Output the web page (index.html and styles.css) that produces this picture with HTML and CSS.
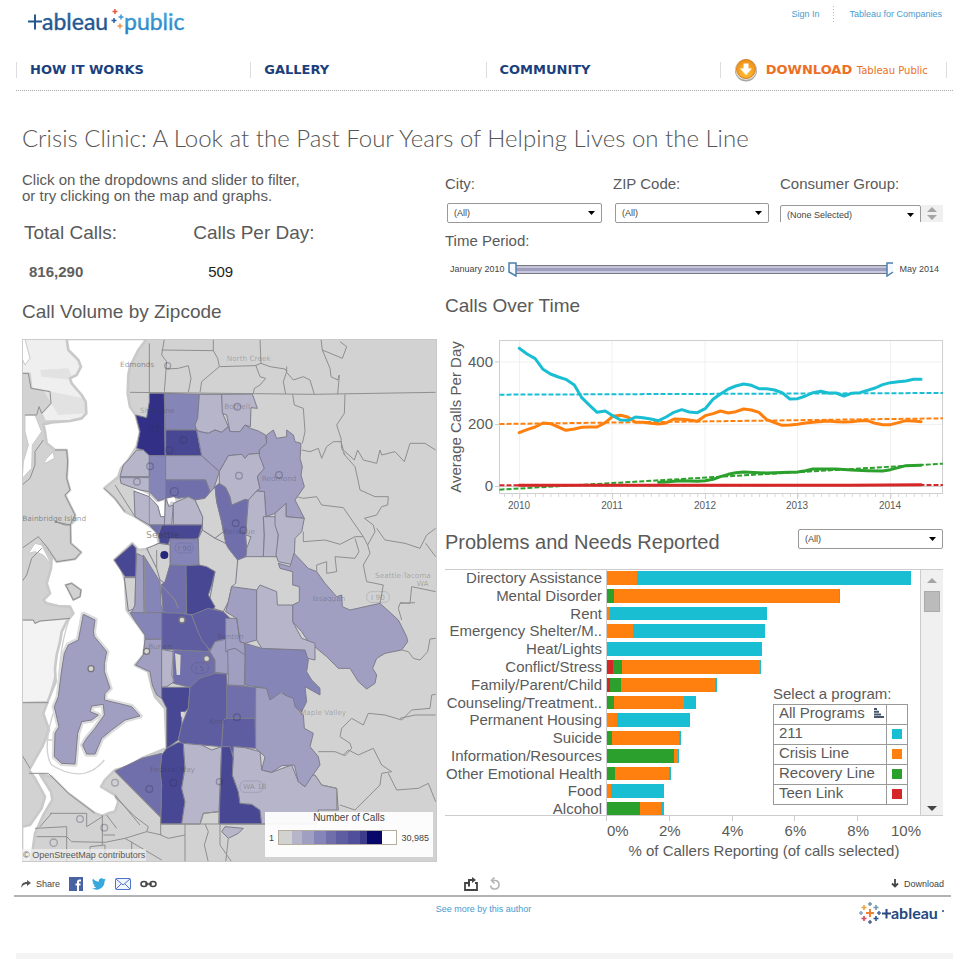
FILE: index.html
```html
<!DOCTYPE html>
<html lang="en">
<head>
<meta charset="utf-8">
<meta name="viewport" content="width=device-width, initial-scale=1">
<title>Crisis Clinic | Tableau Public</title>
<link rel="stylesheet" href="styles.css">
</head>
<body>
<header class="site-header">
  <div class="brand-row">
    <a href="#" class="brand" aria-label="Tableau Public">
      <svg width="162" height="32" viewBox="26 6 162 32">
        <defs>
          <linearGradient id="navy" x1="0" y1="0" x2="0" y2="1"><stop offset="0" stop-color="#2f78b8"/><stop offset="1" stop-color="#1c447e"/></linearGradient>
          <linearGradient id="sky" x1="0" y1="0" x2="0" y2="1"><stop offset="0" stop-color="#59b8e6"/><stop offset="1" stop-color="#1b77bd"/></linearGradient>
        </defs>
        <path d="M28 21.500h14M35 14.500v15" stroke="#24578f" stroke-width="2"/>
        <text class="wordmark" x="42" y="30" fill="url(#navy)" stroke="#24578f">ableau</text>
        <text class="wordmark" x="124" y="30" fill="url(#sky)" stroke="#2f90cf">public</text>
        <path d="M115 9v5M112.500 11.500h5" stroke="#e4573d" stroke-width="1.500"/>
        <path d="M121 14.500v5M118.500 17h5" stroke="#3f9bd5" stroke-width="1.500"/>
        <path d="M114 18v5M111.500 20.500h5" stroke="#2a5f9e" stroke-width="1.500"/>
        <path d="M120 23.500v5M117.500 26h5" stroke="#f0924a" stroke-width="1.500"/>
      </svg>
    </a>
    <div class="account">
      <a href="#">Sign In</a>
      <a href="#">Tableau for Companies</a>
    </div>
  </div>
  <nav class="main-nav">
    <a href="#">HOW IT WORKS</a>
    <a href="#">GALLERY</a>
    <a href="#">COMMUNITY</a>
    <a href="#" class="download">
      <svg width="24" height="24" viewBox="0 0 24 24">
        <defs><radialGradient id="orb" cx=".5" cy=".7" r=".7"><stop offset="0" stop-color="#ffc23c"/><stop offset="1" stop-color="#ee8a12"/></radialGradient></defs>
        <circle cx="12" cy="12.500" r="11" fill="#a9a9a9"/><circle cx="12" cy="11.500" r="10.500" fill="#e9e5df"/>
        <circle cx="12" cy="11" r="9.500" fill="url(#orb)" stroke="#d98420"/>
        <path d="M9.500 5.500h5v5h3.500L12 17l-6-6.500h3.500z" fill="#fff"/>
      </svg>
      <span>DOWNLOAD <small>Tableau Public</small></span>
    </a>
  </nav>
</header>

<main>
<h1>Crisis Clinic: A Look at the Past Four Years of Helping Lives on the Line</h1>
<div class="dashboard">
  <section class="left">
    <p class="intro">Click on the dropdowns and slider to filter,<br>or try clicking on the map and graphs.</p>
    <dl class="stats">
      <div><dt>Total Calls:</dt><dd class="strong">816,290</dd></div>
      <div><dt>Calls Per Day:</dt><dd>509</dd></div>
    </dl>
    <h2>Call Volume by Zipcode</h2>
    <div class="map">
      <svg class="map-art" viewBox="21 12 1245 1569" role="img" aria-label="Map of call volume by zipcode">
        <rect x="21" y="12" width="1245" height="1569" fill="#d2d2d2"/>
        <g fill="#efefef" stroke="#d0d0d0" stroke-width="5">
          <path d="M21 12H155L160 45 190 75 198 95 185 120 165 130 170 145 200 180 212 200 214 235 200 250 165 258 90 258 80 235 108 205 105 170 50 160 45 115H21z"/>
          <path d="M21 855L55 855 60 865 75 858 165 850 140 920 130 985 100 1100 21 1103z" fill="#f3f3f3"/>
        </g>
        <path d="M75 105L160 100 175 135 80 125zM85 165L205 190 212 235 130 240z" fill="#e2e2e2"/>
        <path class="shore" d="M155 12L160 45 190 75 198 95 185 120 165 130 170 145 200 180 212 200 214 235 200 250 165 258 110 262 85 268 90 290 95 325 120 345 155 345 158 380 155 430 165 465 150 480 180 540 180 555 165 570 167 625 198 652 180 672 125 680 95 635 80 625 110 670 108 700 95 745 105 775 85 795 95 805 130 813 165 815 175 835 155 860 140 890 135 920 125 960 120 1000 122 1040 100 1095 85 1135 102 1185 82 1235 42 1305 60 1330 90 1385 80 1420 45 1470 21 1475V1581H48L60 1495 85 1440 112 1395 108 1370 75 1318 110 1325 160 1375 200 1405 240 1435 262 1443 280 1435 300 1430 310 1400 300 1380 258 1355 270 1335 300 1305 340 1295 380 1270 455 1240 450 1120 420 1085 410 1055 400 1010 360 990 385 960 390 925 390 900 365 865 335 825 330 735 320 705 298 675 352 625 370 645 410 640 432 625 425 590 400 570 360 545 330 530 300 490 268 460 310 425 318 400 340 375 365 335 375 290 362 240 345 215 338 175 340 120 345 95 370 45 395 12z"/>
        <g class="shore thin">
          <path d="M30 12L45 70 30 90 21 70V12zM30 240L60 240 80 290 52 330 50 400 22 430 25 380 40 330 30 290zM115 350L118 370 85 388 95 370zM60 625L80 630 110 690 85 660 60 650 40 655z"/>
          <path d="M345 455L375 465 403 478 425 500 448 495 450 545 437 545 428 512 400 490 368 475zM455 487L480 480 485 510 470 500 460 515z"/>
        </g>
        <path d="M152 750L170 745 198 765 195 785 175 795z" class="land"/>
        <path class="waterline" d="M170 835C140 900 130 1000 128 1100 90 1190 90 1260 110 1290 190 1340 240 1310 268 1275M90 1215H115"/>
        <path class="island-rim" d="M205 838L240 855 235 890 238 905 275 950 268 985 268 1010 285 1060 270 1075 268 1095 330 1110 350 1115 375 1143 330 1155 290 1185 260 1210 240 1257 215 1257 203 1230 215 1210 240 1180 268 1140 265 1108 230 1113 225 1130 250 1140 230 1155 200 1160 188 1195 180 1287 140 1285 118 1265 120 1195 132 1175 118 1115 130 1085 140 1005 148 955 160 930 190 915 197 880z"/>
        <g class="zips">
          <path class="c7" d="M403 175L448 175 450 362 390 362 385 345 365 340 375 290 362 240 395 248 403 200z"/>
          <path class="c3" d="M448 175L553 178 548 250 540 270 545 285 455 283 450 285z"/>
          <path class="c1" d="M553 178L620 178 625 240 640 275 620 292 600 285 580 295 555 290 545 285 540 270 548 250z"/>
          <path class="c1" d="M620 178L712 177 727 220 708 218 706 275 690 270 675 290 645 290 635 240 622 235z"/>
          <path class="c6" d="M452 285H545L560 362H452z"/>
          <path class="c2" d="M545 285L555 290 580 295 600 285 620 292 640 275 645 290 675 290 690 270 706 280 730 288 752 300 755 325 733 345 733 355 700 358 690 370 680 358 640 362 613 410 560 362z"/>
          <path class="c1" d="M365 345L385 345 403 362V425H315L325 390 340 375z"/>
          <path class="c3" d="M403 362H452V490L430 498 403 470z"/>
          <path class="c2" d="M452 362H560L613 410 595 465 585 470 572 435H452z"/>
          <path class="c4" d="M452 435H572L585 470 570 490 540 495 520 485 490 490 475 485 452 490z"/>
          <path class="c1" d="M315 428H403V470L375 465 345 455 318 445z"/>
          <path class="c1" d="M357 468L403 485 428 512 437 545 450 545V570H403L360 545z"/>
          <path class="c1" d="M452 490L462 515 475 510 470 570H448z"/>
          <path class="c1" d="M475 505L520 485 540 495 563 545 562 570H475z"/>
          <path class="c4" d="M403 570L440 570 430 600z"/>
          <path class="c6" d="M440 570H562L550 610 530 615 465 612 460 628 435 625 430 600z"/>
          <path class="c3" d="M465 612L550 612 552 690 515 692 465 690z"/>
          <path class="c0" d="M540 495L570 490 600 455 605 500 620 560 625 590 600 610 562 585 563 545z"/>
          <path class="c0" d="M562 585L600 610 632 625 668 675 662 745 650 755 640 800 625 830 580 815 600 710 552 690 550 610z"/>
          <path class="c4" d="M600 455L613 445 632 457 648 490 650 510 690 493 700 495 692 600 695 640 693 665 668 675 640 640 632 625 620 560 605 500z"/>
          <path class="c1" d="M613 410L640 362 680 358 690 370 700 358 733 355 748 400 727 425 735 460 725 468 700 495 690 493 650 510 645 485 632 457 613 445z"/>
          <path class="c2" d="M733 345L755 325 755 300 775 285 785 310 815 305 815 285 835 300 840 320 858 325 855 370 862 395 858 420 868 455 840 495 868 550 813 545 813 505 780 535 753 545 748 470 725 468 735 460 727 425 748 400 733 362z"/>
          <path class="c1" d="M700 495L725 468 748 470 753 545 745 550 748 600 745 665H693L695 640 708 605 692 600z"/>
          <path class="c1" d="M745 545L780 545 790 600 785 665H745L748 600z"/>
          <path class="c1" d="M780 535L813 505 813 545 868 550 860 590 840 610 837 690 790 680 783 660 790 600 780 570z"/>
          <path class="c2" d="M837 655L880 700 905 710 930 745 965 785 980 780 982 815 1005 825 1095 805 1150 855 1175 905 1178 920 1160 945 1110 955 1085 970 1073 1000 1085 1020 1080 1045 1055 1062 1030 1040 1005 1000 970 1000 935 965 905 940 880 920 860 890 833 860 833 810 853 800 853 755 833 750 833 710 795 700 790 685 825 695z"/>
          <path class="c6" d="M352 628L298 675 330 725H363V640z"/>
          <path class="c0" d="M328 728H362L360 820 340 828z"/>
          <path class="c2" d="M365 655L385 665 388 835H348L360 810 362 725z"/>
          <path class="c3" d="M385 660L435 740 438 810 445 833H388z"/>
          <path class="c0" d="M395 640L432 625 465 630V690L450 745 435 735 425 700z"/>
          <path class="c4" d="M465 690L513 692 515 835H445L438 750 450 740z"/>
          <path class="c6" d="M513 692L552 690 575 695 600 710 590 750 580 780 600 815 580 840 515 838z"/>
          <path class="c3" d="M345 833H440V913H390V900L365 865z"/>
          <path class="c5" d="M440 833L500 835 530 840 545 880 570 925 585 950 440 943z"/>
          <path class="c5" d="M530 840L580 820 625 830 645 850 640 910 600 920 585 945 560 915 545 880z"/>
          <path class="c2" d="M390 913H440V1090L425 1080 412 1050 405 1010 362 990 385 960z"/>
          <path class="c1" d="M440 943L475 950 478 1040 455 1055 440 1057z"/>
          <path class="c4" d="M475 945L585 950 600 975V1015L575 1025 555 1030 550 1045 525 1057 475 1045z"/>
          <path class="c2" d="M585 950L600 920 645 910V1017L600 1012V975z"/>
          <path class="c6" d="M440 1057H525L520 1120 500 1140V1170L490 1215 455 1240V1120L440 1090z"/>
          <path class="c5" d="M525 1057L555 1030 600 1015 635 1017 640 1150 625 1155 620 1235 560 1230 500 1225 490 1215 500 1170 520 1120z"/>
          <path class="c4" d="M635 1050L722 1057 720 1150H635z"/>
          <path class="c5" d="M635 1150H720L722 1240 660 1235 650 1260 640 1235H620L625 1155z"/>
          <path class="c6" d="M455 1240L440 1260 435 1310 440 1350 437 1467H500L510 1400 500 1360 510 1300 505 1225 490 1222z"/>
          <path class="c1" d="M505 1225L560 1230 590 1245 620 1235 612 1430 565 1435 555 1467H500L510 1400 500 1360 510 1300z"/>
          <path class="c6" d="M620 1235H645L655 1270 652 1320 670 1370 675 1405 710 1408 735 1425 740 1467H612z"/>
          <path class="c4" d="M300 1308L380 1270 440 1255 435 1310 440 1350 437 1447z"/>
          <path class="c1" d="M655 1235L690 1238 735 1250 740 1305 770 1312 830 1290 850 1340 870 1355 885 1320 900 1320 920 1350 965 1360 970 1425 910 1425 905 1467H740L735 1425 710 1408 675 1405 670 1370 652 1320 655 1270z"/>
          <path class="c2" d="M722 1057L755 1060 765 1095 790 1070 810 1080 835 1090 845 1120 865 1140 868 1180 895 1195 885 1235 910 1265 915 1290 890 1325 870 1355 850 1340 838 1290 800 1292 770 1312 740 1305 750 1265 722 1240z"/>
          <path class="c3" d="M690 925L740 940 870 945 880 975 875 1010 890 1035 915 1060 915 1080 870 1055 875 1100 860 1130 840 1115 835 1090 810 1080 800 1070 780 1085 765 1095 755 1060 690 1050z"/>
          <path class="c2" d="M632 830L665 850 675 920 690 925 725 915V765L650 755 640 800zM632 850V950L660 940 690 960 688 925 675 920 665 850z"/>
          <path class="c2" d="M638 945L660 940 690 960 688 1052 640 1050z"/>
          <path class="c1" d="M725 765L735 750 785 770 787 810 833 810 833 860 860 910 900 925 900 975 878 970 870 945 740 940 725 915z"/>
          <path class="c2" d="M205 838L240 855 235 890 238 905 275 950 268 985 268 1010 285 1060 270 1075 268 1095 330 1110 350 1115 375 1143 330 1155 290 1185 260 1210 240 1257 215 1257 203 1230 215 1210 240 1180 268 1140 265 1108 230 1113 225 1130 250 1140 230 1155 200 1160 188 1195 180 1287 140 1285 118 1265 120 1195 132 1175 118 1115 130 1085 140 1005 148 955 160 930 190 915 197 880z"/>
          <path class="c1" d="M630 1475L685 1480 670 1495 640 1510 620 1490z"/>
        </g>
        <path d="M480 955L497 960 495 1020 485 1020zM497 1130h12l-3 14-8 2z" fill="#d8d8d0"/>
        <g class="borders">
          <path d="M21 115H40L48 160 105 170 108 205 80 235 72 215 65 240 30 240M85 315L60 350 60 390 45 430 21 450M120 345L155 345 158 380 155 430 165 465 150 480 180 540 165 570H150L120 560 167 570V625L198 652 180 672 125 680 95 635 70 605 21 640M80 640L50 670 35 720 21 740M152 750L170 745 198 765 195 785 175 795zM21 855L55 855 60 865 75 858 165 850M21 1103H100M21 1260L45 1300M300 450L360 545M268 460L300 490 330 530"/>
          <path d="M403 25V175M345 172L722 176 893 178 1262 172M448 12L440 60 455 80 448 170M440 45L595 47M595 12V47L608 70 613 95 560 140 555 172M455 102L490 100 520 92 528 130 520 172M613 95L720 92 738 85 735 12M738 85L765 95 810 102 815 110 805 140 812 177M722 90L735 125 752 130 735 150 718 160 715 175M815 95V112L835 135 865 125 885 135 898 178M918 12L922 45 982 70 995 35 975 20M922 45L945 100 948 125 968 135 973 120 968 178M833 178L838 210 865 220 870 290 862 325M990 178L988 235 965 270 978 310 980 340 990 360"/>
          <path d="M860 345L885 350 910 340 920 370 935 335 955 320 978 320 985 345 1018 375 1028 345 1045 375 1085 385 1095 345 1100 360 1140 350 1168 380 1185 325 1230 325 1262 345M985 355L1020 395 1030 440 1035 465 1080 485 1120 485 1118 510 1100 515 1085 540 1048 550 1075 570 1080 590 1058 630 1065 655 1045 690 1055 740 1105 750 1095 805M845 485L865 490 905 485 920 510 985 518 1045 605 1058 630M865 590L865 620 930 615 975 628 1020 605 1045 605M1085 580L1110 615 1170 625 1215 640 1235 600 1262 580M1232 625L1262 665M1020 610L1032 650 1020 670 960 665 965 710 935 715 935 680 905 690V710M1262 770L1190 755 1185 805 1155 803M860 185"/>
          <path d="M1160 855L1150 820 1155 805 1200 803M1262 910L1245 912 1238 950 1215 975 1195 970 1180 950 1160 945M910 1250L960 1250 990 1262 1010 1240 1005 1225 975 1205 980 1180 1010 1150 1045 1170 1060 1135 1110 1140 1160 1155 1190 1125 1245 1120 1250 1080 1262 1078M1155 1150L1200 1140 1262 1140M985 1260L1000 1245 1030 1260 1075 1240 1100 1290 1130 1310 1100 1315 1095 1350 1060 1385 1020 1425 975 1410M1120 1315L1145 1365 1210 1360 1240 1345 1262 1400M900 1320L920 1350 965 1360V1425"/>
          <path d="M42 1315H100L160 1375 240 1435M300 1310L437 1447V1467H905M300 1380L375 1470M300 1385L360 1445 400 1475 395 1490 330 1510 270 1522 170 1520 155 1505V1475L60 1480M105 1435H215V1475L262 1445M75 1475L110 1435M437 1467V1500L460 1510 510 1500M510 1467V1581M570 1467L580 1490 568 1530 580 1581M615 1467V1530L650 1581M330 1510L440 1575M65 1505H155V1581M225 1581V1535L270 1530V1581M350 1581V1520M262 1440V1530M275 1440L305 1480M265 1500H300M395 1490L440 1500M555 1467L565 1435 612 1430V1467M640 1510L632 1581"/>
          <path d="M425 645V700M388 665V835M438 750L480 795 490 820M403 425V570M475 945L470 1020 478 1040"/>
        </g>
        <g class="city-dots">
          <circle cx="420" cy="281" r="10"/><circle cx="505" cy="315" r="10"/><circle cx="463" cy="345" r="10"/><circle cx="405" cy="394" r="10"/><circle cx="366" cy="440" r="10"/><circle cx="478" cy="470" r="12"/><circle cx="667" cy="215" r="10"/><circle cx="672" cy="422" r="10"/><circle cx="792" cy="420" r="10"/><circle cx="662" cy="565" r="10"/><circle cx="685" cy="586" r="10"/><circle cx="666" cy="1147" r="10"/><circle cx="475" cy="1343" r="10"/><circle cx="403" cy="1362" r="10"/><circle cx="300" cy="1343" r="10"/><circle cx="116" cy="1523" r="11"/><circle cx="268" cy="1478" r="10"/><circle cx="195" cy="1452" r="10"/><circle cx="458" cy="92" r="9"/><circle cx="613" cy="1340" r="9"/>
        </g>
        <g class="shields"><rect x="480" y="624" width="55" height="30" rx="14"/><rect x="530" y="983" width="50" height="32" rx="14"/><rect x="1055" y="770" width="68" height="32" rx="14"/><rect x="675" y="1338" width="68" height="34" rx="14"/></g>
        <circle cx="448" cy="660" r="12" fill="#26267c"/>
        <g class="town-dots"><circle cx="501" cy="855" r="9"/><circle cx="395" cy="949" r="9"/><circle cx="575" cy="971" r="9"/><circle cx="228" cy="1001" r="9"/></g>
        <g class="places">
          <text x="315" y="97" class="dark">Edmonds</text><text x="635" y="77">North Creek</text><text x="375" y="234">Shoreline</text><text x="628" y="222">Bothell</text><text x="740" y="438">Redmond</text>
          <text x="22" y="557" class="dark">Bainbridge Island</text><text x="625" y="598">Bellevue</text><text x="1080" y="730">Seattle-Tacoma</text><text x="1205" y="752">WA</text><text x="893" y="797">Issaquah</text>
          <text x="608" y="912">Renton</text><text x="400" y="942">Burien</text><text x="855" y="1140">Maple Valley</text><text x="582" y="1167">Kent</text><text x="405" y="1312">Federal Way</text>
          <text x="488" y="647">I 90</text><text x="540" y="1007">I 5</text><text x="1068" y="794">I 90</text><text x="684" y="1362">WA 18</text>
          <text class="big" x="393" y="609">Seattle</text>
        </g>
        <rect x="22" y="13" width="1243" height="1567" fill="none" stroke="#c8c8c8" stroke-width="3"/>
      </svg>
      <span class="attribution">© OpenStreetMap contributors</span>
      <div class="map-legend">
        <span class="map-legend-title">Number of Calls</span>
        <div class="ramp-row"><span>1</span><div class="ramp"></div><span>30,985</span></div>
      </div>
    </div>
  </section>

  <section class="right">
    <form class="filters">
      <div class="field"><label for="city">City:</label><select id="city" class="picker"><option>(All)</option></select></div>
      <div class="field"><label for="zip">ZIP Code:</label><select id="zip" class="picker"><option>(All)</option></select></div>
      <div class="field group"><label for="group">Consumer Group:</label>
        <div class="clip"><select id="group" class="picker"><option>(None Selected)</option></select>
          <div class="spin"><button type="button" aria-label="Scroll up"><i class="tri up"></i></button><button type="button" aria-label="Scroll down"><i class="tri down"></i></button></div></div>
      </div>
    </form>
    <p class="period-label">Time Period:</p>
    <div class="period">
      <span>January 2010</span>
      <div class="range">
        <input class="from" type="range" min="0" max="52" value="0" aria-label="Start month">
        <input class="to" type="range" min="0" max="52" value="52" aria-label="End month">
      </div>
      <span>May 2014</span>
    </div>
    <h2>Calls Over Time</h2>
    <svg class="line-chart" viewBox="445 336 498 180" role="img" aria-label="Average calls per day, 2010 to 2014">
      <path d="M499 362H943M499 424.500H943M519.500 341V493M612 341V493M705 341V493M797.500 341V493M890.500 341V493" stroke="#f0f0f0" fill="none"/>
      <path d="M499 486.500H943" stroke="#cfcfcf"/>
      <rect x="499.500" y="340.500" width="443" height="153" fill="none" stroke="#cfcfcf"/>
      <path d="M495 362h4M495 424.500h4M495 486.500h4M519.500 493v6M612.500 493v6M705.500 493v6M797.500 493v6M890.500 493v6" stroke="#cfcfcf"/>
      <path d="M504 495.500H943" stroke="#d8d8d8" stroke-width="3" stroke-dasharray="1 6.730"/>
      <g transform="translate(440 330) scale(.34 .33333)" class="series">
        <g class="trend">
          <path class="s-211" d="M175 194L1479 189"/><path class="s-crisis" d="M175 282L1479 265"/><path class="s-recovery" d="M175 479L1479 401"/><path class="s-teen" d="M175 466L1479 465"/>
        </g>
        <path class="s-crisis" d="M233 308L256 299 280 291 303 279 325 281 348 291 370 301 395 297 417 292 440 291 462 291 486 278 508 259 531 256 552 261 575 277 597 277 620 280 643 282 665 279 688 267 711 268 733 270 757 274 780 257 803 251 825 243 848 249 870 245 893 237 916 240 938 247 961 269 984 278 1006 286 1029 285 1052 283 1075 279 1097 277 1142 273 1165 275 1188 276 1210 275 1235 272 1257 272 1280 280 1302 284 1325 284 1348 278 1370 272 1393 273 1415 275"/>
        <path class="s-211" d="M233 55L256 72 280 86 303 118 325 132 348 141 370 148 395 165 417 203 440 226 462 247 486 243 508 257 531 270 554 271 575 261 597 263 620 267 643 272 665 261 688 247 711 239 733 246 757 248 780 236 803 208 825 192 848 177 870 168 893 162 916 166 938 176 961 176 984 180 1006 188 1029 207 1052 206 1075 198 1097 188 1120 184 1142 189 1165 189 1188 198 1210 190 1235 188 1257 181 1280 174 1302 164 1325 158 1348 155 1370 153 1393 148 1415 148"/>
        <path class="s-recovery" d="M643 457L665 456 688 454 711 452 757 454 780 452 803 448 825 440 848 433 870 428 893 426 938 428 961 429 984 428 1029 427 1052 426 1075 422 1097 417 1165 417 1210 420 1257 422 1302 423 1325 419 1348 413 1370 407 1415 406"/>
        <path class="s-teen" d="M233 466L700 466 1200 466 1415 464"/>
      </g>
      <g class="y-ticks"><text x="493" y="367">400</text><text x="493" y="429">200</text><text x="493" y="491">0</text></g>
      <g class="x-ticks"><text x="519" y="509">2010</text><text x="612" y="509">2011</text><text x="705" y="509">2012</text><text x="797" y="509">2013</text><text x="890" y="509">2014</text></g>
      <text class="y-title" transform="translate(461 417) rotate(-90)">Average Calls Per Day</text>
    </svg>

    <div class="problems-head">
      <h2>Problems and Needs Reported</h2>
      <select class="picker" aria-label="Problem filter"><option>(All)</option></select>
    </div>
    <div class="bars-frame">
      <div class="bars">
        <div class="row"><span>Directory Assistance</span><div class="bar"><i class="b-crisis" style="width:9.6%"></i><i class="b-211" style="width:87.6%"></i></div></div>
        <div class="row"><span>Mental Disorder</span><div class="bar"><i class="b-recovery" style="width:2.3%"></i><i class="b-crisis" style="width:71.9%"></i><i class="b-211" style="width:.4%"></i></div></div>
        <div class="row"><span>Rent</span><div class="bar"><i class="b-crisis" style="width:.9%"></i><i class="b-211" style="width:50.2%"></i></div></div>
        <div class="row"><span>Emergency Shelter/M..</span><div class="bar"><i class="b-crisis" style="width:8.2%"></i><i class="b-211" style="width:42.3%"></i></div></div>
        <div class="row"><span>Heat/Lights</span><div class="bar"><i class="b-211" style="width:49.5%"></i></div></div>
        <div class="row"><span>Conflict/Stress</span><div class="bar"><i class="b-teen" style="width:1.8%"></i><i class="b-recovery" style="width:2.9%"></i><i class="b-crisis" style="width:44.2%"></i><i class="b-211" style="width:.3%"></i></div></div>
        <div class="row"><span>Family/Parent/Child</span><div class="bar"><i class="b-teen" style="width:1%"></i><i class="b-recovery" style="width:3.6%"></i><i class="b-crisis" style="width:30%"></i><i class="b-211" style="width:.4%"></i></div></div>
        <div class="row"><span>Counseling/Treatment..</span><div class="bar"><i class="b-recovery" style="width:2.2%"></i><i class="b-crisis" style="width:22.4%"></i><i class="b-211" style="width:3.9%"></i></div></div>
        <div class="row"><span>Permanent Housing</span><div class="bar"><i class="b-crisis" style="width:3.1%"></i><i class="b-211" style="width:23.3%"></i></div></div>
        <div class="row"><span>Suicide</span><div class="bar"><i class="b-recovery" style="width:1.5%"></i><i class="b-crisis" style="width:21.6%"></i><i class="b-211" style="width:.4%"></i></div></div>
        <div class="row"><span>Information/Resources</span><div class="bar"><i class="b-recovery" style="width:21.3%"></i><i class="b-crisis" style="width:1.3%"></i><i class="b-211" style="width:.5%"></i></div></div>
        <div class="row"><span>Other Emotional Health</span><div class="bar"><i class="b-recovery" style="width:2.4%"></i><i class="b-crisis" style="width:17.4%"></i><i class="b-211" style="width:.6%"></i></div></div>
        <div class="row"><span>Food</span><div class="bar"><i class="b-crisis" style="width:1.2%"></i><i class="b-211" style="width:17.1%"></i></div></div>
        <div class="row"><span>Alcohol</span><div class="bar"><i class="b-recovery" style="width:10.5%"></i><i class="b-crisis" style="width:6.8%"></i><i class="b-211" style="width:1%"></i></div></div>
      </div>
      <div class="scrollbar">
        <button type="button" aria-label="Scroll up"><i class="tri up"></i></button>
        <div class="thumb"></div>
        <button type="button" class="end" aria-label="Scroll down"><i class="tri down dark"></i></button>
      </div>
      <div class="program-key">
        <p>Select a program:</p>
        <table>
          <tr><th scope="col">All Programs <svg width="10" height="10" viewBox="0 0 10 10"><path d="M0 0h3v2H0zM0 2.700h5v2H0zM0 5.400h7v2H0zM0 8h10v2H0z" fill="#46566e"/></svg></th><th></th></tr>
          <tr><td>211</td><td><i class="b-211"></i></td></tr>
          <tr><td>Crisis Line</td><td><i class="b-crisis"></i></td></tr>
          <tr><td>Recovery Line</td><td><i class="b-recovery"></i></td></tr>
          <tr><td>Teen Link</td><td><i class="b-teen"></i></td></tr>
        </table>
      </div>
    </div>
    <div class="x-axis"><span>0%</span><span>2%</span><span>4%</span><span>6%</span><span>8%</span><span>10%</span></div>
    <p class="x-title">% of Callers Reporting (of calls selected)</p>
  </section>
</div>
</main>

<div class="toolbar">
  <div class="tools">
    <a href="#" class="tool"><svg width="10" height="8" viewBox="0 0 10 8"><path d="M6 0l4 3-4 3V4C3.500 4 1.500 5 .5 8 0 4 2 2 6 2z" fill="#555"/></svg>Share</a>
    <a href="#" aria-label="Facebook"><svg width="14" height="14" viewBox="0 0 14 14"><rect width="14" height="14" fill="#4862a3"/><path d="M12 3.500h-1.500c-1 0-1.500.5-1.500 1.500v9M6.500 7.500h5" stroke="#fff" stroke-width="2" fill="none"/></svg></a>
    <a href="#" aria-label="Twitter"><svg width="14" height="12" viewBox="0 0 24 20"><path d="M24 2.400a10 10 0 0 1-2.800.8A5 5 0 0 0 23.300.5a10 10 0 0 1-3.100 1.200 4.900 4.900 0 0 0-8.400 4.500A14 14 0 0 1 1.700 1a4.900 4.900 0 0 0 1.500 6.600A5 5 0 0 1 1 7a4.900 4.900 0 0 0 3.900 4.900 5 5 0 0 1-2.200.1 4.900 4.900 0 0 0 4.600 3.400A10 10 0 0 1 0 17.400 14 14 0 0 0 21.500 5z" fill="#35a8dc"/></svg></a>
    <a href="#" aria-label="Email"><svg width="16" height="12" viewBox="0 0 16 12"><rect x=".5" y=".5" width="15" height="11" rx="1" fill="#f1f5ff" stroke="#4d74c8"/><path d="M1 1l7 6 7-6M1 11l5-5M15 11l-5-5" fill="none" stroke="#4d74c8"/></svg></a>
    <a href="#" aria-label="Link"><svg width="17" height="8" viewBox="0 0 17 8"><ellipse cx="4" cy="4" rx="3" ry="2.500" fill="none" stroke="#444" stroke-width="1.500"/><ellipse cx="13" cy="4" rx="3" ry="2.500" fill="none" stroke="#444" stroke-width="1.500"/><path d="M5 4h7" stroke="#444" stroke-width="1.500"/></svg></a>
  </div>
  <div class="tools center">
    <a href="#" aria-label="Export"><svg width="14" height="14" viewBox="0 0 14 14"><path d="M4 6H1v7h12V6h-2" fill="none" stroke="#444" stroke-width="1.800"/><path d="M5 9.500V3h3" fill="none" stroke="#444" stroke-width="2"/><path d="M8 0l4 3-4 3z" fill="#444"/></svg></a>
    <a href="#" aria-label="Revert"><svg width="12" height="14" viewBox="0 0 12 14"><path d="M3 3.500h3.500a4.300 4.300 0 1 1-5 5M5.500 .5L2.500 3.500l3 3" fill="none" stroke="#b5b5b5" stroke-width="1.600"/></svg></a>
  </div>
  <div class="tools end"><a href="#" class="tool"><svg width="8" height="9" viewBox="0 0 8 9"><path d="M4 0v7M1 4.500l3 3 3-3" fill="none" stroke="#444" stroke-width="1.800"/></svg>Download</a></div>
</div>
<div class="credits">
  <a href="#" class="more">See more by this author</a>
  <a href="#" class="mark" aria-label="Tableau">
    <svg width="88" height="22" viewBox="0 0 88 22">
      <g fill="none" stroke-width="1.600">
        <path d="M13 7v8M9 11h8" stroke="#ee8133" stroke-width="2"/>
        <path d="M7 3v5M4.500 5.500h5" stroke="#eda33b"/><path d="M19 3v5M16.500 5.500h5" stroke="#6c9aab"/>
        <path d="M7 14v5M4.500 16.500h5" stroke="#cf4961"/><path d="M19 14v5M16.500 16.500h5" stroke="#30568f"/>
        <path d="M13 0v4M11 2h4" stroke="#6c9aab"/><path d="M13 18v4M11 20h4" stroke="#5b6591"/>
        <path d="M4 9v4M2 11h4" stroke="#8aa6cc"/><path d="M22 9v4M20 11h4" stroke="#4f6c9e"/>
        <path d="M25 11.500h9M29.500 7v9.500" stroke="#24487f" stroke-width="2"/>
      </g>
      <text x="34" y="17" class="smallmark">ableau</text>
      <circle cx="86" cy="9" r="1" fill="#24487f"/>
    </svg>
  </a>
</div>
<footer class="site-footer"></footer>
</body>
</html>
```

FILE: styles.css
```css
* { box-sizing: border-box; }
body {
  margin: 0;
  min-height: 100vh;
  display: flex;
  flex-direction: column;
  background: #fff;
  color: #5a5a5a;
  font: 15px/20px "Liberation Sans", Arial, sans-serif;
}
a { text-decoration: none; }
p, dl, dd, h1, h2 { margin: 0; }
h2 { font-size: 19px; line-height: 24px; font-weight: 400; }
button { border: 0; padding: 0; background: none; display: grid; place-items: center; }
svg { display: block; }

.site-header { margin: 0 20px 0 16px; border-bottom: 1px dotted #aaa; }
.brand-row { display: flex; justify-content: space-between; height: 54px; padding: 6px 11px 0 10px; }
.wordmark { font: 23px "Lato", sans-serif; stroke-width: .4; }
.account { display: flex; height: 16px; font-size: 9px; line-height: 16px; }
.account a { color: #4a9bd0; }
.account a + a { margin-left: 14px; padding-left: 16px; background: linear-gradient(#bbb 50%, transparent 50%) 0 0 / 1px 3px repeat-y; }

.main-nav { display: grid; grid-template-columns: 234fr 235fr 234fr 227fr; height: 36px; padding: 8px 6px 0 0; }
.main-nav a {
  height: 16px;
  padding-left: 13px;
  border-left: 1px solid #ddd;
  color: #1b3f7c;
  font: bold 13px/16px "DejaVu Sans", Verdana, sans-serif;
  white-space: nowrap;
}
.main-nav .download { display: flex; align-items: center; gap: 8px; border-right: 1px solid #ddd; color: #ec6f23; }
.main-nav small { font-size: 10px; font-weight: 400; }

main { margin: 0 30px 0 22px; }
h1 { margin-top: 29px; font: 300 24px/36px Lato, "Open Sans", sans-serif; color: #555; white-space: nowrap; }
.dashboard { display: grid; grid-template-columns: 415fr 498fr; gap: 8px; margin-top: 16px; align-items: start; }
.left, .right { min-width: 0; }

.intro { line-height: 16px; }
.stats { display: grid; grid-template-columns: 170fr 245fr; margin: 17px 0 18px 2px; }
.stats dt { font-size: 19px; line-height: 24px; }
.stats dd { margin: 17px 0 0 15px; color: #222; }
.stats .strong { margin-left: 5px; color: #606060; font-weight: 700; }

.map { position: relative; margin-top: 15px; }
.map-art { width: 100%; height: auto; }
.shore { fill: #fff; stroke: #c9c9c9; stroke-width: 8; stroke-linejoin: round; }
.shore.thin { stroke-width: 3; }
.island-rim { fill: none; stroke: #dcdcdc; stroke-width: 16; stroke-linejoin: round; }
.land { fill: #d2d2d2; stroke: #c0c0c0; stroke-width: 6; }
.waterline { fill: none; stroke: #d0d0d0; stroke-width: 4; }
.zips { stroke: #7d7d8c; stroke-width: 3; stroke-linejoin: round; }
.c0 { fill: #d2d2d2; }
.c1 { fill: #b7b5c9; }
.c2 { fill: #a09fc2; }
.c3 { fill: #8685b7; }
.c4 { fill: #706fac; }
.c5 { fill: #5f5da2; }
.c6 { fill: #484794; }
.c7 { fill: #323086; }
.borders { fill: none; stroke: #8f8f8f; stroke-width: 3; stroke-linejoin: round; }
.city-dots { fill: none; stroke: #303050; stroke-opacity: .3; stroke-width: 4; }
.shields { fill: none; stroke: #303050; stroke-opacity: .15; stroke-width: 3; }
.town-dots { fill: #d8d8d0; stroke: #77777f; stroke-width: 4; }
.places { font: 22px "DejaVu Sans", sans-serif; fill: #333; fill-opacity: .3; }
.places .dark { fill-opacity: .5; }
.places .big { font-size: 28px; fill-opacity: .5; }
.attribution {
  position: absolute;
  left: 0;
  bottom: 1px;
  padding: 0 1px;
  background: rgba(240, 240, 240, .7);
  font-size: 9px;
  line-height: 12px;
}
.map-legend {
  position: absolute;
  right: 4px;
  bottom: 5px;
  width: 168px;
  height: 45px;
  background: rgba(255, 255, 255, .93);
  color: #444;
  font-size: 9px;
  line-height: 12px;
  text-align: center;
}
.map-legend-title { font-size: 10px; }
.ramp-row { display: flex; align-items: center; gap: 4px; margin: 6px 4px 0; }
.ramp {
  flex: 1;
  height: 15px;
  border: 1px solid #b3ad9e;
  background: linear-gradient(to right, #d2d2d0 11%, #b7b5c9 11% 20%, #a09fc2 20% 30%, #8685b7 30% 40%, #706fac 40% 49%, #5f5da2 49% 59%, #504f9b 59% 69%, #3d3c8c 69% 75%, #08086b 75% 88%, #fff 88%);
}

.right { padding-top: 2px; }
.filters { display: grid; grid-template-columns: 168fr 167fr 163fr; height: 49px; }
.picker {
  appearance: none;
  width: 100%;
  height: 20px;
  padding: 0 18px 0 6px;
  border: 1px solid #999;
  border-radius: 2px;
  background: #fff url("data:image/svg+xml,%3Csvg xmlns='http://www.w3.org/2000/svg' width='7' height='4'%3E%3Cpath d='M0 0h7L3.500 4z' fill='%23000'/%3E%3C/svg%3E") no-repeat right 6px center;
  color: #444;
  font: 9px "Liberation Sans", Arial, sans-serif;
}
.field { padding: 0 11px 0 2px; }
.field label { display: block; margin: 0 0 7px -2px; }
.field.group { padding: 0; }
.field.group label { margin: 0 0 11px; }
.clip { display: flex; height: 17px; overflow: hidden; }
.clip .picker { flex: 1; min-width: 0; }
.spin { width: 22px; background: #f0f0f0; display: grid; }
.tri { border: 5px solid transparent; }
.tri.up { border-top: 0; border-bottom-color: #a5a5a5; }
.tri.down { border-bottom: 0; border-top-color: #a5a5a5; }
.tri.dark { border-top-color: #444; }
.period-label { margin-top: 8px; }
.period { display: flex; align-items: center; gap: 3px; height: 20px; margin: 8px 4px 15px 5px; color: #444; font-size: 9px; }
.period span:last-child { margin-left: 2px; }
.range { flex: 1; display: grid; align-items: center; background: linear-gradient(#77777f, #77777f) center / calc(100% - 12px) 9px no-repeat; }
.range::before {
  content: "";
  grid-area: 1 / 1;
  height: 7px;
  margin: 0 6px;
  background: linear-gradient(#c3c3da 2px, #9f9fbb 2px 5px, #c9c9e4 5px);
}
.range input { grid-area: 1 / 1; appearance: none; width: 100%; min-width: 0; height: 16px; margin: 0; background: none; pointer-events: none; }
.range input::-webkit-slider-thumb {
  appearance: none;
  width: 9px;
  height: 15px;
  pointer-events: auto;
  background: url("data:image/svg+xml,%3Csvg xmlns='http://www.w3.org/2000/svg' width='9' height='15'%3E%3Cpath d='M1 1h7v13L1 10z' fill='%23f4f8ff' stroke='%234d7fae' stroke-width='1.500'/%3E%3C/svg%3E");
}
.range .to::-webkit-slider-thumb {
  background: url("data:image/svg+xml,%3Csvg xmlns='http://www.w3.org/2000/svg' width='9' height='15'%3E%3Cpath d='M8 1H2v13l6-4' fill='%23f4f8ff' stroke='%234d7fae' stroke-width='1.500'/%3E%3C/svg%3E");
}

.line-chart { width: 100%; height: auto; margin-top: 18px; fill: #5a5a5a; }
.series path { fill: none; stroke-width: 3; vector-effect: non-scaling-stroke; stroke-linejoin: round; stroke-linecap: round; }
.series .trend path { stroke-width: 2; stroke-dasharray: 5 2; stroke-linecap: butt; }
.s-211 { stroke: #1abed2; }
.s-crisis { stroke: #ff800e; }
.s-recovery { stroke: #2ca02c; }
.s-teen { stroke: #d62728; }
.y-ticks { font-size: 15px; text-anchor: end; }
.x-ticks { font-size: 10px; text-anchor: middle; }
.y-title { font-size: 15px; text-anchor: middle; }

.problems-head { display: flex; justify-content: space-between; align-items: flex-start; margin-top: 13px; }
.problems-head h2 { font-size: 20px; line-height: 26px; }
.problems-head .picker { width: 145px; }
.bars-frame {
  position: relative;
  display: grid;
  grid-template-columns: 1fr 22px;
  height: 247px;
  margin-top: 14px;
  border-top: 1px solid #ccc;
  border-bottom: 1px solid #ccc;
  overflow: hidden;
}
.bars { display: grid; grid-template-rows: repeat(14, 1fr); height: 249px; border-right: 1px solid #ccc; }
.row { display: grid; grid-template-columns: 161px 1fr; min-height: 0; line-height: 15px; }
.row span { padding-right: 4px; text-align: right; white-space: nowrap; }
.bar { display: flex; padding: 1px 0 3px; border-left: 1px solid #ccc; }
.b-211 { background: #1abed2; }
.b-crisis { background: #ff800e; }
.b-recovery { background: #2ca02c; }
.b-teen { background: #d62728; }
.scrollbar { display: flex; flex-direction: column; background: #f0f0f0; }
.scrollbar button { height: 21px; }
.scrollbar .thumb { height: 21px; margin: 0 3px; border: 1px solid #aaa; background: #bbb; }
.scrollbar .end { margin-top: auto; }
.program-key { position: absolute; left: 328px; top: 114px; width: 135px; }
.program-key table { width: 100%; border-collapse: collapse; background: #fff; }
.program-key th, .program-key td { height: 20px; padding: 0 0 3px 5px; border: 1px solid #999; line-height: 16px; font-weight: 400; text-align: left; white-space: nowrap; }
.program-key svg { display: inline-block; margin-left: 5px; }
.program-key i { display: block; width: 10px; height: 10px; margin-top: 2px; }
.program-key tr > :last-child { width: 21px; }
.x-axis {
  display: grid;
  grid-template-columns: 1fr repeat(4, 2fr) 1fr;
  height: 25px;
  padding: 5px 22px 0 162px;
  overflow: hidden;
  background: repeating-linear-gradient(to right, #ccc 0 1px, transparent 1px 20%) 161px 0 / calc(100% - 184px) 5px no-repeat;
  text-align: center;
}
.x-axis span:first-child { text-align: left; }
.x-axis span:last-child { text-align: right; }
.x-title { padding: 0 22px 0 162px; text-align: center; }

.toolbar { display: grid; grid-template-columns: 1fr auto 1fr; align-items: center; height: 35px; margin: 0 22px 0 14px; padding: 10px 7px 0; border-bottom: 2px solid #b3b3b3; font-size: 9px; }
.tools { display: flex; align-items: center; gap: 9px; }
.tools.center { gap: 11px; }
.tools.end { justify-content: flex-end; }
.tool { display: flex; align-items: center; gap: 5px; color: #444; }
.credits { display: grid; grid-template-columns: 1fr auto 1fr; margin: 0 28px 0 22px; padding-top: 4px; font-size: 9px; }
.more { grid-column: 2; line-height: 16px; color: #4a9bd0; }
.mark { justify-self: end; padding-top: 1px; }
.smallmark { font: bold 16px Lato, sans-serif; fill: #24487f; }
.site-footer { flex: 0 0 6px; margin: auto 20px 0 16px; background: #f4f4f4; }
```
